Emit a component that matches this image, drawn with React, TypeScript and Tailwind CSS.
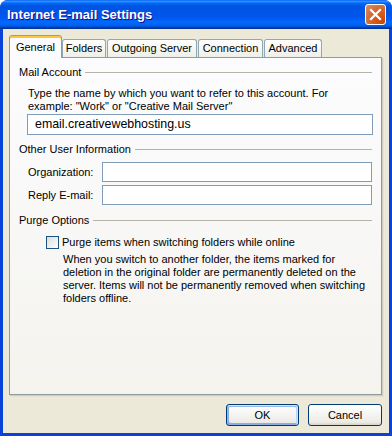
import React from "react";

const tabs = [
    { label: "General", w: "w-[53px]" },
    { label: "Folders", w: "w-[44px]" },
    { label: "Outgoing Server", w: "w-[90px]" },
    { label: "Connection", w: "w-[65px]" },
    { label: "Advanced", w: "w-[58px]" },
];

const GroupHeader = ({ title }: { title: string }) => (
    <div className="flex items-center h-[13px] leading-[13px]">
        <span className="whitespace-nowrap">{title}</span>
        <div className="flex-1 h-px bg-[#b4b3a8] ml-[4px]" />
    </div>
);

const TextBox = ({ className = "", value = "" }: { className?: string; value?: string }) => (
    <div className={`border border-[#7f9db9] bg-white flex items-center ${className}`}>
        {value && <span className="pl-[7px] text-[12.4px] leading-none">{value}</span>}
    </div>
);

export default function App() {
    return (
        <div className="w-[392px] h-[436px] flex flex-col rounded-t-[8px] overflow-hidden bg-[#0842d8] font-['Liberation_Sans',Arial,sans-serif] text-[11px] text-black">
            {/* title bar */}
            <div className="h-[29px] shrink-0 flex items-center justify-between pl-[7px] pr-[6px] bg-[linear-gradient(180deg,#0058ee_0%,#3593ff_4%,#288eff_6%,#127dff_8%,#036ffc_10%,#0262ee_14%,#0057e5_20%,#0054e3_24%,#0055eb_56%,#005bf5_66%,#026afe_76%,#0062ef_86%,#0052d6_92%,#0040ab_94%,#003092_100%)]">
                <span className="text-white font-bold text-[13px] [text-shadow:1px_1px_#0f1089]">
                    Internet E-mail Settings
                </span>
                <div className="w-[21px] h-[21px] rounded-[3px] border border-white flex items-center justify-center bg-[radial-gradient(circle_at_90%_90%,#cc4600_0%,#dc6527_55%,#cd7546_70%,#e88a63_100%)]">
                    <svg width="13" height="13" viewBox="0 0 13 13">
                        <path d="M2 2 L11 11 M11 2 L2 11" stroke="white" strokeWidth="2.2" strokeLinecap="square" />
                    </svg>
                </div>
            </div>

            {/* body */}
            <div className="flex-1 mx-[3px] mb-[3px] bg-[#ece9d8] flex flex-col pl-[6px] pt-[6px]">
                {/* tabs */}
                <div className="flex items-end h-[22px] relative z-10">
                    {tabs.map((t, i) =>
                        i === 0 ? (
                            <div
                                key={t.label}
                                className={`${t.w} h-[23px] -mb-px bg-[#fcfcfe] border border-[#919b9c] border-b-0 border-t-[#e68b2c] rounded-t-[3px] shadow-[inset_0_2px_#ffc83c] flex items-center justify-center pt-[1px]`}
                            >
                                {t.label}
                            </div>
                        ) : (
                            <div
                                key={t.label}
                                className={`${t.w} ${i > 1 ? "ml-px" : ""} h-[18px] border border-[#91a7b4] border-b-0 rounded-t-[3px] bg-[linear-gradient(180deg,#fff_0%,#fafaf9_26%,#f0f0ea_95%,#ecebe6_100%)] flex items-center justify-center`}
                            >
                                {t.label}
                            </div>
                        )
                    )}
                </div>

                {/* panel */}
                <div className="w-[373px] h-[338px] border border-[#919b9c] bg-[linear-gradient(180deg,#fcfcfe_0%,#f4f3ee_100%)] shadow-[1px_1px_0_#d0cdc0,2px_2px_0_#e3e0d4] flex flex-col pl-[9px] pr-[9px] pt-[8px]">
                    <GroupHeader title="Mail Account" />
                    <div className="ml-[9px] mt-[8px] leading-[13px] whitespace-nowrap">
                        Type the name by which you want to refer to this account. For
                        <br />
                        example: "Work" or "Creative Mail Server"
                    </div>
                    <TextBox className="ml-[8px] mt-[1px] h-[21px] -mr-px" value="email.creativewebhosting.us" />

                    <div className="mt-[8px]">
                        <GroupHeader title="Other User Information" />
                    </div>
                    <div className="flex items-center mt-[6px]">
                        <span className="ml-[9px] w-[74px]">Organization:</span>
                        <TextBox className="flex-1 h-[20px]" />
                    </div>
                    <div className="flex items-center mt-[3px]">
                        <span className="ml-[9px] w-[74px]">Reply E-mail:</span>
                        <TextBox className="flex-1 h-[20px]" />
                    </div>

                    <div className="mt-[9px]">
                        <GroupHeader title="Purge Options" />
                    </div>
                    <div className="flex items-center mt-[9px] ml-[27px] h-[13px]">
                        <div className="w-[13px] h-[13px] border border-[#1c5180] bg-[linear-gradient(135deg,#dcdcd7,#fff)]" />
                        <span className="ml-[3px] whitespace-nowrap">Purge items when switching folders while online</span>
                    </div>
                    <div className="ml-[44px] mt-[4px] leading-[13px] whitespace-nowrap">
                        When you switch to another folder, the items marked for
                        <br />
                        deletion in the original folder are permanently deleted on the
                        <br />
                        server. Items will not be permanently removed when switching
                        <br />
                        folders offline.
                    </div>
                </div>

                {/* buttons */}
                <div className="flex justify-end gap-[9px] mt-[9px] w-[373px]">
                    <button className="w-[73px] h-[22px] rounded-[3px] border border-[#003c74] bg-[linear-gradient(180deg,#fff_0%,#ecebe6_86%,#d6d0c5_100%)] shadow-[inset_-1px_1px_#cee7ff,inset_1px_2px_#98b8ea,inset_-2px_2px_#bcd4f6,inset_1px_-1px_#89ade4,inset_2px_-2px_#89ade4] text-[11px]">
                        OK
                    </button>
                    <button className="w-[74px] h-[22px] rounded-[3px] border border-[#003c74] bg-[linear-gradient(180deg,#fff_0%,#ecebe6_86%,#d6d0c5_100%)] text-[11px]">
                        Cancel
                    </button>
                </div>
            </div>
        </div>
    );
}
